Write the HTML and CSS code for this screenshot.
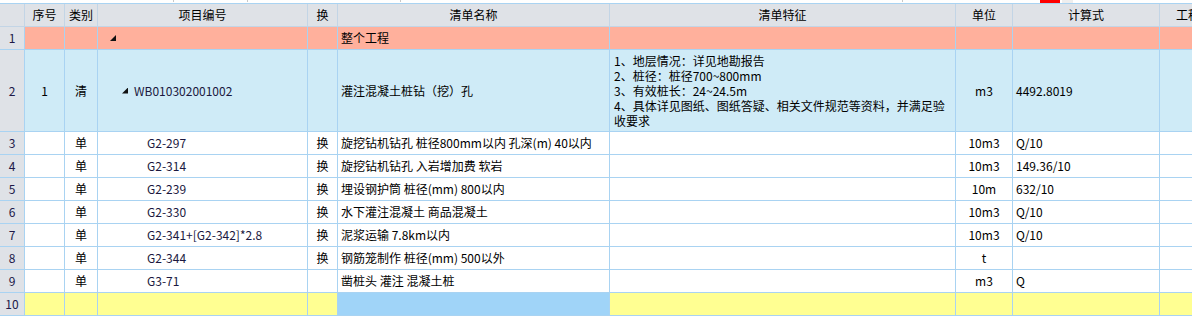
FILE: index.html
```html
<!DOCTYPE html>
<html lang="zh-CN">
<head>
  <meta charset="UTF-8">
  <title>清单计价 – 分部分项</title>
  <link rel="stylesheet" href="styles.css">
</head>
<body>
  <div class="topbar">
    <span class="tick t1"></span>
    <span class="tick t2"></span>
    <span class="tick t3"></span>
    <span class="tick t4"></span>
    <span class="flag"></span>
    <span class="box"></span>
  </div>

  <div class="grid">
    <div class="row head">
      <div class="c num"></div>
      <div class="c mid">序号</div>
      <div class="c mid">类别</div>
      <div class="c mid">项目编号</div>
      <div class="c mid">换</div>
      <div class="c mid">清单名称</div>
      <div class="c mid">清单特征</div>
      <div class="c mid">单位</div>
      <div class="c mid">计算式</div>
      <div class="c">工程量表达式</div>
    </div>

    <div class="row whole">
      <div class="c num">1</div>
      <div class="c"></div>
      <div class="c"></div>
      <div class="c lv0"><span class="tri"></span></div>
      <div class="c"></div>
      <div class="c">整个工程</div>
      <div class="c"></div>
      <div class="c"></div>
      <div class="c"></div>
      <div class="c"></div>
    </div>

    <div class="row bill">
      <div class="c num">2</div>
      <div class="c mid">1</div>
      <div class="c mid">清</div>
      <div class="c lv1"><span class="tri"></span>WB010302001002</div>
      <div class="c"></div>
      <div class="c">灌注混凝土桩钻（挖）孔</div>
      <div class="c desc">1、地层情况：详见地勘报告<br>2、桩径：桩径700~800mm<br>3、有效桩长：24~24.5m<br>4、具体详见图纸、图纸答疑、相关文件规范等资料，并满足验收要求</div>
      <div class="c mid">m3</div>
      <div class="c">4492.8019</div>
      <div class="c"></div>
    </div>

    <div class="row">
      <div class="c num">3</div>
      <div class="c"></div>
      <div class="c mid">单</div>
      <div class="c lv2">G2-297</div>
      <div class="c mid">换</div>
      <div class="c">旋挖钻机钻孔 桩径800mm以内 孔深(m) 40以内</div>
      <div class="c"></div>
      <div class="c mid">10m3</div>
      <div class="c">Q/10</div>
      <div class="c"></div>
    </div>

    <div class="row">
      <div class="c num">4</div>
      <div class="c"></div>
      <div class="c mid">单</div>
      <div class="c lv2">G2-314</div>
      <div class="c mid">换</div>
      <div class="c">旋挖钻机钻孔 入岩增加费 软岩</div>
      <div class="c"></div>
      <div class="c mid">10m3</div>
      <div class="c">149.36/10</div>
      <div class="c"></div>
    </div>

    <div class="row">
      <div class="c num">5</div>
      <div class="c"></div>
      <div class="c mid">单</div>
      <div class="c lv2">G2-239</div>
      <div class="c mid">换</div>
      <div class="c">埋设钢护筒 桩径(mm) 800以内</div>
      <div class="c"></div>
      <div class="c mid">10m</div>
      <div class="c">632/10</div>
      <div class="c"></div>
    </div>

    <div class="row">
      <div class="c num">6</div>
      <div class="c"></div>
      <div class="c mid">单</div>
      <div class="c lv2">G2-330</div>
      <div class="c mid">换</div>
      <div class="c">水下灌注混凝土 商品混凝土</div>
      <div class="c"></div>
      <div class="c mid">10m3</div>
      <div class="c">Q/10</div>
      <div class="c"></div>
    </div>

    <div class="row">
      <div class="c num">7</div>
      <div class="c"></div>
      <div class="c mid">单</div>
      <div class="c lv2">G2-341+[G2-342]*2.8</div>
      <div class="c mid">换</div>
      <div class="c">泥浆运输 7.8km以内</div>
      <div class="c"></div>
      <div class="c mid">10m3</div>
      <div class="c">Q/10</div>
      <div class="c"></div>
    </div>

    <div class="row">
      <div class="c num">8</div>
      <div class="c"></div>
      <div class="c mid">单</div>
      <div class="c lv2">G2-344</div>
      <div class="c mid">换</div>
      <div class="c">钢筋笼制作 桩径(mm) 500以外</div>
      <div class="c"></div>
      <div class="c mid">t</div>
      <div class="c"></div>
      <div class="c"></div>
    </div>

    <div class="row">
      <div class="c num">9</div>
      <div class="c"></div>
      <div class="c mid">单</div>
      <div class="c lv2">G3-71</div>
      <div class="c"></div>
      <div class="c">凿桩头 灌注 混凝土桩</div>
      <div class="c"></div>
      <div class="c mid">m3</div>
      <div class="c">Q</div>
      <div class="c"></div>
    </div>

    <div class="row blank">
      <div class="c num">10</div>
      <div class="c"></div>
      <div class="c"></div>
      <div class="c"></div>
      <div class="c"></div>
      <div class="c sel"></div>
      <div class="c"></div>
      <div class="c"></div>
      <div class="c"></div>
      <div class="c"></div>
    </div>
  </div>
</body>
</html>
```

FILE: styles.css
```css
* { box-sizing: border-box; margin: 0; padding: 0; }
html, body { overflow: hidden; }
body {
  width: 1192px;
  height: 316px;
  background: #fff;
  font: 12px/16px "Noto Sans CJK SC", "Noto Sans", sans-serif;
  color: #000;
}

/* thin strip above the grid */
.topbar {
  height: 4px;
  display: flex;
  align-items: flex-start;
  border-bottom: 1px solid #a9d3f2;
}
.tick { width: 1px; height: 2px; background: #c8c8c8; }
.t1 { margin-left: 173px; }
.t2 { margin-left: 73px; }
.t3 { margin-left: 152px; }
.t4 { margin-left: 501px; }
.flag { width: 20px; height: 3px; background: #f00; margin-left: 137px; }
.box { width: 11px; height: 3px; background: #eee; margin-left: 2px; }

/* grid */
.grid { width: 1260px; }
.row {
  display: grid;
  grid-template-columns: 25px 40px 33px 210px 30px 272px 346px 57px 147px 100px;
  height: 23px;
}
.c {
  border-right: 1px solid #a9d3f2;
  border-bottom: 1px solid #a9d3f2;
  display: flex;
  align-items: center;
  padding: 0 3px;
  white-space: nowrap;
  overflow: hidden;
}
.mid { justify-content: center; }
.num {
  justify-content: center;
  background: #dfe2e7;
  color: #201848;
  padding: 0;
}

.head .c {
  background: #dfe2e7;
  border-color: #c3d5e6;
  justify-content: center;
}
.head .c:last-child { justify-content: flex-start; padding-left: 16px; }

.whole .c { background: #ffb09c; }
.whole .num { background: #dfe2e7; }

.bill { height: 82px; }
.bill .c { background: #cfebf7; }
.bill .num { background: #dfe2e7; }
.desc { white-space: normal; line-height: 15px; padding: 0 4px; }

.blank .c { background: #ffff92; }
.blank .num { background: #dfe2e7; }
.blank .sel { background: #a0d4f8; }

/* tree column */
.lv0 { padding-left: 12px; }
.lv1 { padding-left: 24px; color: #1a1840; }
.lv2 { padding-left: 49px; color: #1a1840; }
.tri {
  width: 6px;
  height: 6px;
  margin-right: 6px;
  background: #111;
  clip-path: polygon(100% 0, 100% 100%, 0 100%);
}
```
